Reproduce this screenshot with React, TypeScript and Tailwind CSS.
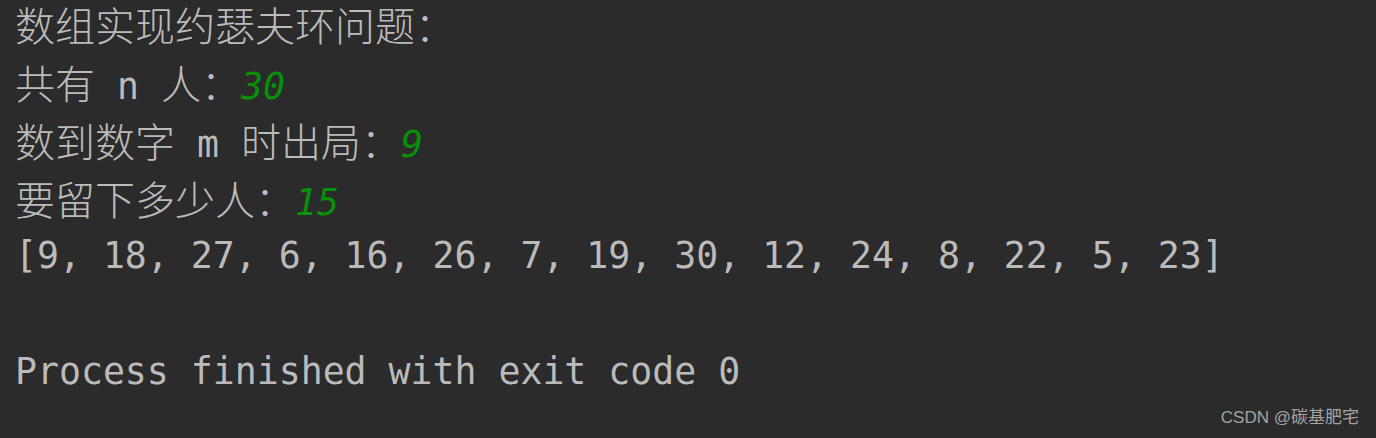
import React from "react";

const cjk = "font-['Noto_Sans_CJK_SC','Noto_Sans_CJK_JP',sans-serif] text-[40px] font-light";

const C = ({ children }: { children: React.ReactNode }) => (
  <span className={cjk}>{children}</span>
);
const L = ({ children }: { children: React.ReactNode }) => (
  <span className="font-['DejaVu_Sans_Mono',monospace] text-[36.5px] whitespace-pre">{children}</span>
);
const G = ({ children }: { children: React.ReactNode }) => (
  <span className="font-['DejaVu_Sans_Mono',monospace] text-[36.5px] italic text-[#089008]">{children}</span>
);

export default function App() {
  return (
    <div className="relative w-[1376px] h-[438px] bg-[#2b2b2b] text-[#bbbbbb] overflow-hidden">
      <div className="pl-[15px] flex flex-col">
        <div className={`h-[53px] leading-[48px] whitespace-pre ${cjk}`}>数组实现约瑟夫环问题：</div>
        <div className="h-[58px] leading-[58px] whitespace-pre">
          <C>共有</C>
          <L> n </L>
          <C>人：</C>
          <G>30</G>
        </div>
        <div className="h-[58px] leading-[58px] whitespace-pre">
          <C>数到数字</C>
          <L> m </L>
          <C>时出局：</C>
          <G>9</G>
        </div>
        <div className="h-[58px] leading-[58px] whitespace-pre">
          <C>要留下多少人：</C>
          <G>15</G>
        </div>
        <div className="h-[58px] leading-[58px] whitespace-pre">
          <L>[9, 18, 27, 6, 16, 26, 7, 19, 30, 12, 24, 8, 22, 5, 23]</L>
        </div>
        <div className="h-[58px] leading-[58px]" />
        <div className="h-[58px] leading-[58px] whitespace-pre">
          <L>Process finished with exit code 0</L>
        </div>
      </div>
      <div className="absolute right-[17px] bottom-[10px] text-[17px] leading-[20px] text-[#a3a3a3] font-['Liberation_Sans','Noto_Sans_CJK_SC',sans-serif]">
        CSDN @碳基肥宅
      </div>
    </div>
  );
}
